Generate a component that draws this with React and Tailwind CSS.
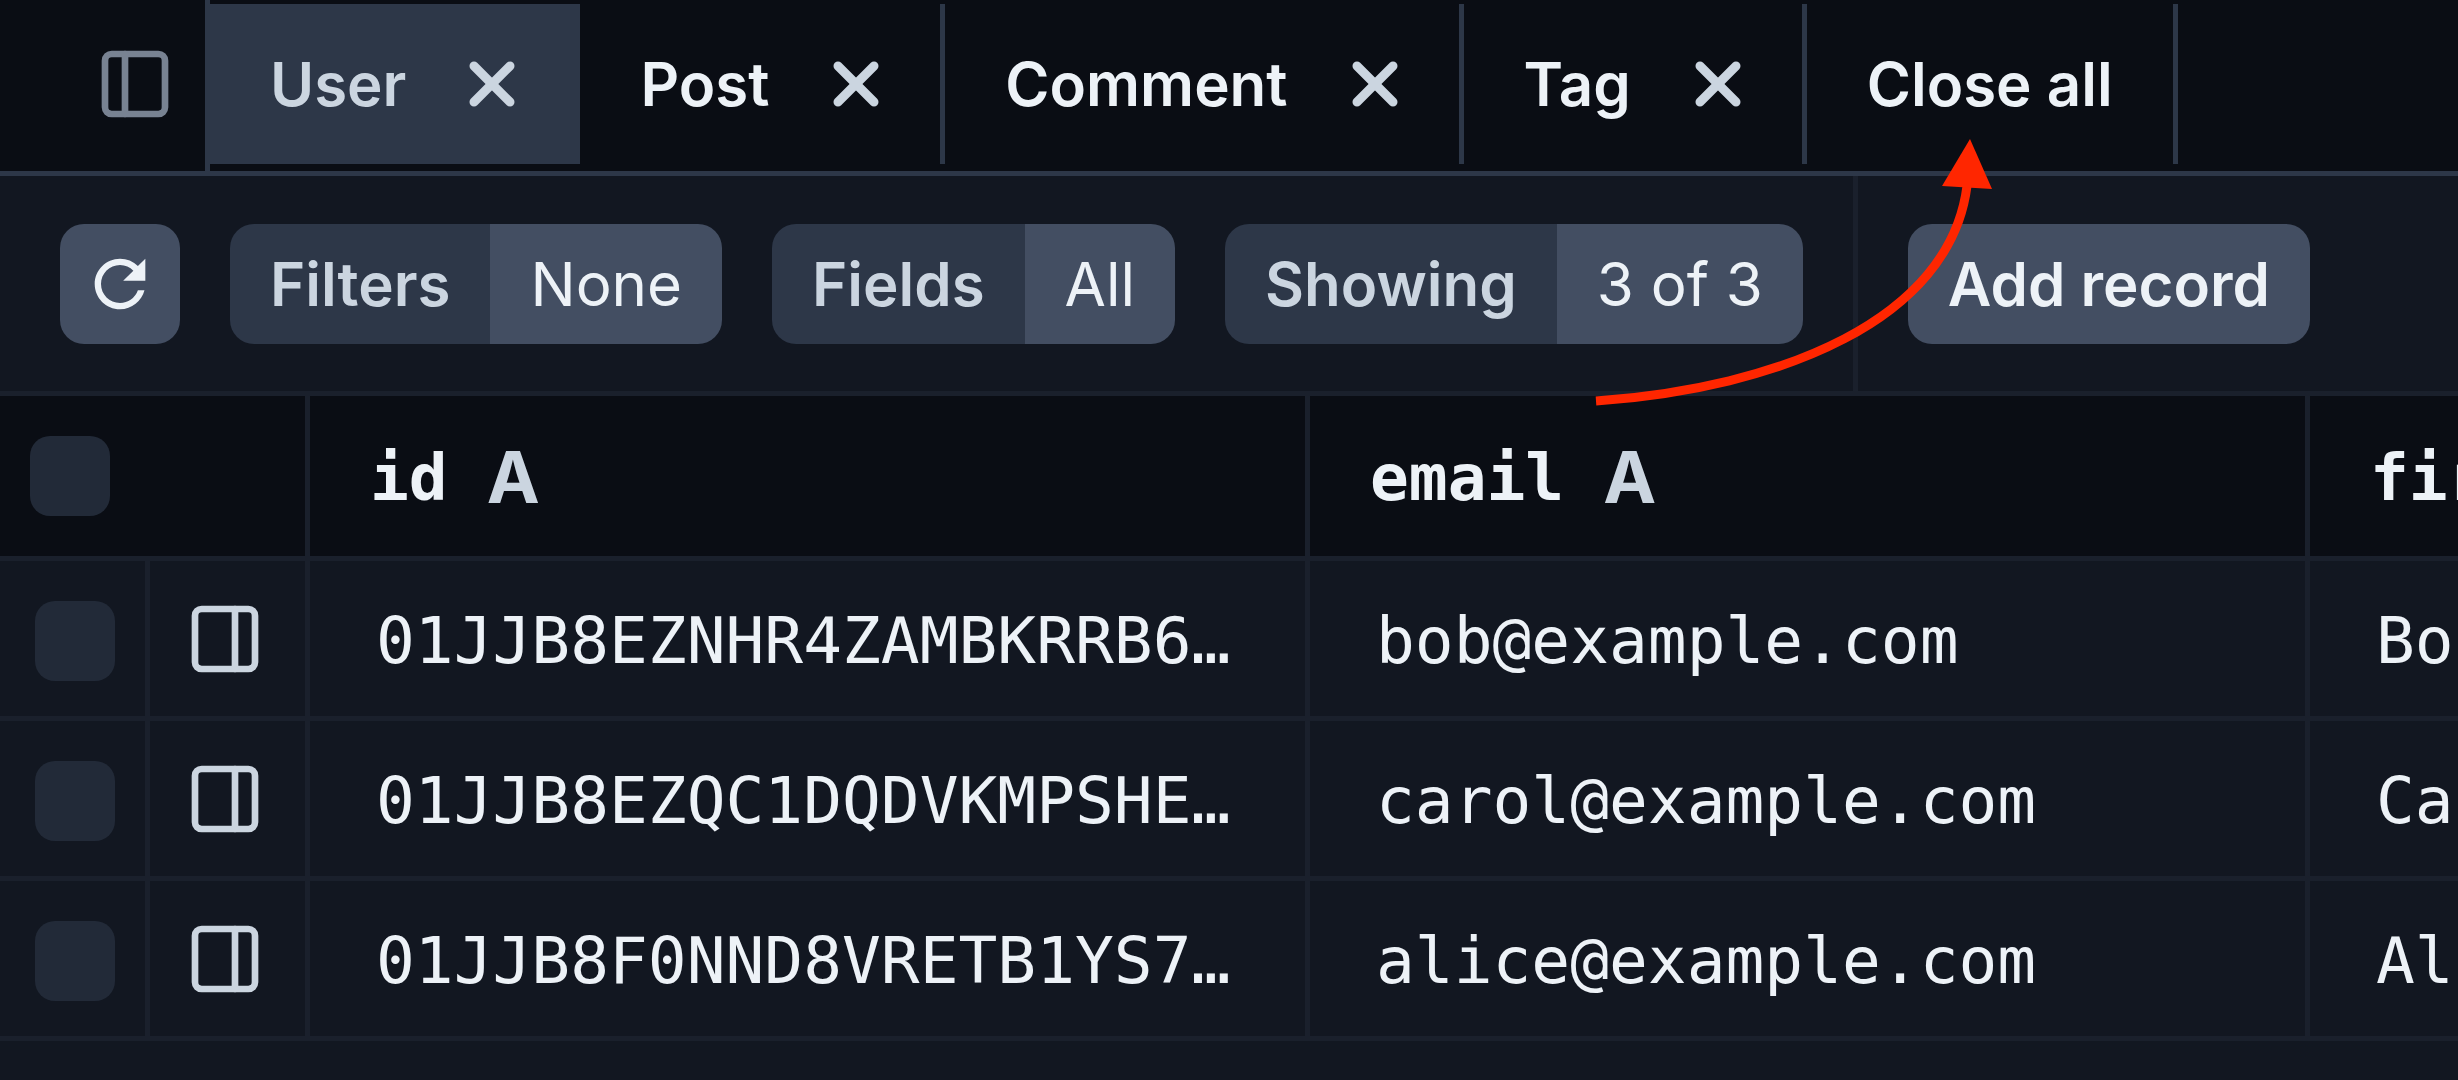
import { X, PanelLeft, PanelRight } from 'lucide-react'
import { MdRefresh } from 'react-icons/md'

const tabs = ['User', 'Post', 'Comment', 'Tag']

const controls = [
  { label: 'Filters', value: 'None' },
  { label: 'Fields', value: 'All' },
  { label: 'Showing', value: '3 of 3' },
]

const rows = [
  { id: '01JJB8EZNHR4ZAMBKRRB6…', email: 'bob@example.com', firstName: 'Bob' },
  { id: '01JJB8EZQC1DQDVKMPSHE…', email: 'carol@example.com', firstName: 'Carol' },
  { id: '01JJB8F0NND8VRETB1YS7…', email: 'alice@example.com', firstName: 'Alice' },
]

function Tab({ name, active }) {
  return (
    <div
      className={
        active
          ? 'flex items-center gap-[50px] bg-[#2d3748] pl-[65px] pr-[52px] -ml-[5px] text-[#cbd5e0]'
          : 'flex items-center gap-[51px] border-r-[5px] border-[#2d3748] pl-[60px] pr-[48px] text-[#edf2f7]'
      }
    >
      <span>{name}</span>
      <X size={72} strokeWidth={3} className="text-[#cbd5e0]" />
    </div>
  )
}

function Control({ label, value }) {
  return (
    <div className="flex h-[120px] overflow-hidden rounded-[24px]">
      <div className="flex items-center bg-[#2d3748] px-[40px] font-semibold text-[#cbd5e0]">{label}</div>
      <div className="flex items-center bg-[#434e62] px-[40px] text-[#edf2f7]">{value}</div>
    </div>
  )
}

function HeaderCell({ name }) {
  return (
    <div className="flex w-[1000px] shrink-0 items-center gap-[39px] border-r-[5px] border-[#1a202c] pl-[60px]">
      <span className="pt-[4px] font-['DejaVu_Sans_Mono',monospace] text-[64.5px] font-bold text-[#edf2f7]">{name}</span>
      <span className="pt-[2px] text-[71px] font-bold text-[#cbd5e0]">A</span>
    </div>
  )
}

function Cell({ children }) {
  return (
    <div className="flex w-[1000px] shrink-0 items-center overflow-hidden border-r-[5px] border-[#1a202c] pt-[6px] pl-[66px] font-['DejaVu_Sans_Mono',monospace] text-[64.5px] whitespace-nowrap text-[#edf2f7]">
      {children}
    </div>
  )
}

export default function App() {
  return (
    <div className="relative h-screen w-full overflow-hidden bg-[#121721] font-['Inter',sans-serif] text-[60px]">
      {/* Tab bar */}
      <div className="flex h-[176px] border-b-[5px] border-[#2d3748] bg-[#0a0d14] font-semibold">
        <div className="flex w-[210px] shrink-0 items-center justify-end border-r-[5px] border-[#2d3748] pr-[30px]">
          <PanelLeft size={80} strokeWidth={2} className="-mt-[3px] text-[#788292]" />
        </div>
        <div className="flex pt-[4px] pb-[7px]">
          {tabs.map((name, i) => (
            <Tab key={name} name={name} active={i === 0} />
          ))}
          <div className="flex items-center border-r-[5px] border-[#2d3748] px-[60px] text-[#edf2f7]">Close all</div>
        </div>
      </div>

      {/* Toolbar */}
      <div className="flex h-[220px] items-center gap-[50px] border-b-[5px] border-[#1a202c] pl-[60px]">
        <button className="flex h-[120px] w-[120px] items-center justify-center rounded-[24px] bg-[#434e62] text-[#edf2f7]">
          <MdRefresh size={76} />
        </button>
        {controls.map((c) => (
          <Control key={c.label} label={c.label} value={c.value} />
        ))}
        <div className="w-[5px] self-stretch bg-[#1a202c]" />
        <button className="flex h-[120px] items-center rounded-[24px] bg-[#434e62] px-[40px] font-semibold text-[#edf2f7]">
          Add record
        </button>
      </div>

      {/* Table header */}
      <div className="flex h-[165px] border-b-[5px] border-[#1a202c] bg-[#0a0d14]">
        <div className="flex w-[310px] shrink-0 items-center border-r-[5px] border-[#1a202c] pl-[30px]">
          <div className="h-[80px] w-[80px] rounded-[20px] bg-[#222a38]" />
        </div>
        <HeaderCell name="id" />
        <HeaderCell name="email" />
        <HeaderCell name="firstName" />
      </div>

      {/* Rows */}
      {rows.map((row) => (
        <div key={row.id} className="flex h-[160px] border-b-[5px] border-[#1a202c]">
          <div className="flex w-[150px] shrink-0 items-center border-r-[5px] border-[#1a202c] pt-[4px] pl-[35px]">
            <div className="h-[80px] w-[80px] rounded-[20px] bg-[#222a38]" />
          </div>
          <div className="flex w-[160px] shrink-0 items-center justify-center border-r-[5px] border-[#1a202c] pr-[6px]">
            <PanelRight size={80} strokeWidth={2} className="text-[#cbd5e0]" />
          </div>
          <Cell>{row.id}</Cell>
          <Cell>{row.email}</Cell>
          <Cell>{row.firstName}</Cell>
        </div>
      ))}

      {/* Annotation arrow */}
      <svg className="pointer-events-none absolute inset-0 h-full w-full" viewBox="0 0 2458 1080">
        <path d="M1596 401C1780 388 1950 320 1967 186" fill="none" stroke="#ff2600" strokeWidth="9" />
        <polygon points="1970,139 1942,186 1992,189" fill="#ff2600" />
      </svg>
    </div>
  )
}
